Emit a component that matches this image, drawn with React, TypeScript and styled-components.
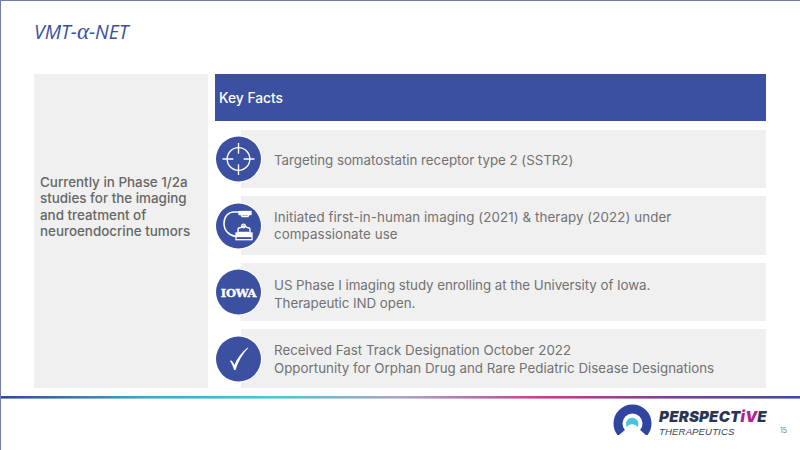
import React from 'react';
import styled, { createGlobalStyle } from 'styled-components';

const GlobalStyle = createGlobalStyle`
  html, body {
    margin: 0;
    padding: 0;
    background: #fff;
  }
`;

const Slide = styled.div`
  width: 800px;
  height: 450px;
  box-sizing: border-box;
  border-top: 1px solid #6f7ea6;
  border-left: 1px solid #6f7ea6;
  background: #fff;
  display: flex;
  flex-direction: column;
  overflow: hidden;
  font-family: Inter, 'Noto Sans', sans-serif;
`;

const Title = styled.h1`
  margin: 19px 0 0 33px;
  height: 54px;
  font-family: 'Open Sans', sans-serif;
  font-size: 19.5px;
  line-height: 24px;
  font-weight: 400;
  font-style: italic;
  color: #3b50a0;
`;

const Alpha = styled.span`
  font-family: 'Liberation Serif', serif;
  font-size: 23px;
`;

const Content = styled.div`
  display: grid;
  grid-template-columns: 174px 551px;
  gap: 7px;
  margin-left: 33px;
  height: 314px;
`;

const Summary = styled.div`
  background: #f0f0f0;
  box-sizing: border-box;
  padding: 100px 6px 0;
  font-size: 13.4px;
  line-height: 16.3px;
  font-weight: 500;
  color: #666;
`;

const Facts = styled.div`
  display: flex;
  flex-direction: column;
`;

const Header = styled.div`
  height: 47px;
  background: #3b50a0;
  display: flex;
  align-items: center;
  padding-left: 4px;
  margin-bottom: 9px;
  font-size: 13.8px;
  font-weight: 500;
  color: #fff;
`;

const Row = styled.div<{ $height: number; $gap: number }>`
  position: relative;
  height: ${(p) => p.$height}px;
  margin-bottom: ${(p) => p.$gap}px;
  padding-left: 26px;
`;

const Card = styled.div<{ $leading: number; $nudge: number; $tracking: number }>`
  height: 100%;
  box-sizing: border-box;
  background: #f0f0f0;
  display: flex;
  align-items: center;
  padding: ${(p) => p.$nudge}px 0 0 33px;
  font-size: 13.35px;
  line-height: ${(p) => p.$leading}px;
  letter-spacing: ${(p) => p.$tracking}px;
  color: #727272;
`;

const Badge = styled.div`
  position: absolute;
  left: 1px;
  top: 50%;
  transform: translateY(-50%);
  width: 45px;
  height: 45px;
  border-radius: 50%;
  background: #3b50a0;
  box-shadow: 0 0 0 1px #fff;
  display: flex;
  align-items: center;
  justify-content: center;
  color: #fff;
`;

const IowaMark = styled.span`
  font-family: 'DejaVu Serif', serif;
  font-size: 11.5px;
  font-weight: 700;
  letter-spacing: -0.3px;
  -webkit-text-stroke: 0.4px #fff;
`;

const Rainbow = styled.div`
  height: 3px;
  margin-top: 8px;
  box-shadow: inset 0 -1px 0 rgba(255, 255, 255, 0.4);
  background: linear-gradient(
    90deg,
    #2f4a9c 0%,
    #46a4c8 18%,
    #4cc4da 33%,
    #a9a6cc 50%,
    #c23f93 68%,
    #7d3f97 84%,
    #3b50a0 100%
  );
`;

const Footer = styled.div`
  display: flex;
  align-items: flex-start;
  justify-content: flex-end;
  flex: 1;
  padding: 5px 13px 0 0;
`;

const Logo = styled.div`
  display: flex;
  align-items: flex-start;
  gap: 7px;
  margin-right: 13px;
`;

const LogoText = styled.div`
  display: flex;
  flex-direction: column;
  padding-top: 6px;
`;

const LogoName = styled.span`
  font-family: Inter, sans-serif;
  font-size: 15px;
  line-height: 13px;
  font-weight: 900;
  font-style: italic;
  letter-spacing: 0.2px;
  color: #2b3550;

  em {
    color: #b7228e;
  }
`;

const LogoSub = styled.span`
  margin-top: 3px;
  font-family: 'Liberation Sans', sans-serif;
  font-size: 9.6px;
  line-height: 11px;
  font-style: italic;
  letter-spacing: 0.1px;
  color: #3a4258;
`;

const PageNumber = styled.span`
  margin-top: 22px;
  font-size: 7px;
  color: #777;
`;

function TargetIcon() {
  return (
    <svg width="33" height="33" viewBox="0 0 32 32" fill="none" stroke="#fff" strokeWidth="1.3">
      <circle cx="16" cy="16" r="11" />
      <path d="M16 .5V11M16 21v10.500M.5 16H11M21 16h10.500" />
    </svg>
  );
}

function ScannerIcon() {
  return (
    <svg width="34" height="34" viewBox="0 0 34 34" fill="none" stroke="#fff" strokeWidth="1.3">
      <path d="M18 3.500h-6C6 3.500 2 8.500 2 15c0 7 5 12 12 13" strokeWidth="1.5" />
      <rect x="17" y="3" width="12" height="3" fill="#fff" />
      <path d="M19 6h8l-1 2h-6z" />
      <path d="M16 21c0-1.500 1.500-2 3-2 .5-2 5-2 6 0 1.500 0 3 .5 3 2v3H16z" />
      <circle cx="21.500" cy="17.500" r="1.800" />
      <rect x="14" y="24.500" width="16" height="2.400" fill="#fff" />
      <rect x="14" y="28" width="16" height="3.200" />
    </svg>
  );
}

function CheckIcon() {
  return (
    <svg width="20" height="24" viewBox="0 0 20 24" fill="#fff">
      <path d="M1 14.500l1-.7c1.500 1.200 2.600 2.800 3.400 4.600C8 12 12.500 6 18.600 1l.6.6C13.500 7.500 9.500 14.500 6.500 23.500h-1.500C4.200 20 2.800 17 1 14.500z" />
    </svg>
  );
}

function LogoMark() {
  return (
    <svg width="39" height="31" viewBox="0 0 39 31">
      <path d="M8.500 28.900A14.500 14.500 0 1 1 30.500 28.900" fill="none" stroke="#2f45a0" strokeWidth="9" />
      <path d="M13 20a6.200 6.200 0 0 1 12.400 0c0 1-.5 2.500-1 3-1-1.500-2.700-2.800-5.200-2.800s-4.200 1.300-5.200 2.800c-.5-.5-1-2-1-3z" fill="#4cc4da" />
    </svg>
  );
}

const facts = [
  { height: 58, gap: 8, leading: 19, nudge: 2, tracking: -0.04, icon: <TargetIcon />, lines: ['Targeting somatostatin receptor type 2 (SSTR2)'] },
  {
    height: 59,
    gap: 8,
    leading: 17,
    nudge: 0,
    tracking: 0.08,
    icon: <ScannerIcon />,
    lines: ['Initiated first-in-human imaging (2021) & therapy (2022) under', 'compassionate use'],
  },
  {
    height: 58,
    gap: 8,
    leading: 18,
    nudge: 4,
    tracking: -0.05,
    icon: <IowaMark>IOWA</IowaMark>,
    lines: ['US Phase I imaging study enrolling at the University of Iowa.', 'Therapeutic IND open.'],
  },
  {
    height: 59,
    gap: 0,
    leading: 18,
    nudge: 1,
    tracking: 0,
    icon: <CheckIcon />,
    lines: ['Received Fast Track Designation October 2022', 'Opportunity for Orphan Drug and Rare Pediatric Disease Designations'],
  },
];

export default function App(): React.ReactElement {
  return (
    <Slide>
      <GlobalStyle />
      <Title>
        VMT-<Alpha>α</Alpha>-NET
      </Title>
      <Content>
        <Summary>
          Currently in Phase 1/2a studies for the imaging and treatment of neuroendocrine tumors
        </Summary>
        <Facts>
          <Header>Key Facts</Header>
          {facts.map((fact) => (
            <Row key={fact.lines[0]} $height={fact.height} $gap={fact.gap}>
              <Badge>{fact.icon}</Badge>
              <Card $leading={fact.leading} $nudge={fact.nudge} $tracking={fact.tracking}>
                <div>
                  {fact.lines.map((line) => (
                    <div key={line}>{line}</div>
                  ))}
                </div>
              </Card>
            </Row>
          ))}
        </Facts>
      </Content>
      <Rainbow />
      <Footer>
        <Logo>
          <LogoMark />
          <LogoText>
            <LogoName>
              PERSPECT<em>iV</em>E
            </LogoName>
            <LogoSub>THERAPEUTICS</LogoSub>
          </LogoText>
        </Logo>
        <PageNumber>15</PageNumber>
      </Footer>
    </Slide>
  );
}
